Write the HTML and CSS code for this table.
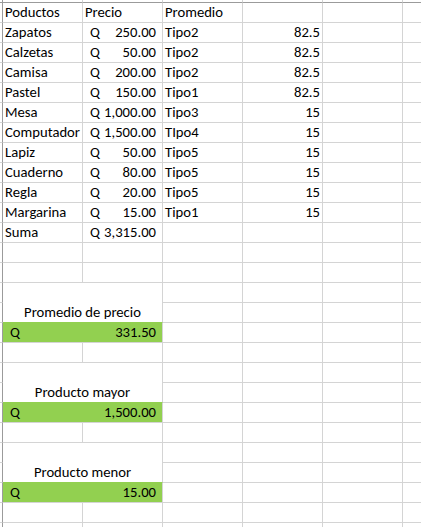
FILE: index.html
```html
<!DOCTYPE html>
<html>
<head>
<meta charset="utf-8"/>
<title>Productos</title>
<link rel="stylesheet" href="styles.css">
</head>
<body>

<table class="sheet">
<colgroup>
<col class="c-rh"><col class="c-cell"><col class="c-cell"><col class="c-cell"><col class="c-cell"><col class="c-cell"><col class="c-last">
</colgroup>
<tr class="colhead"><td class="corner"></td><td></td><td></td><td></td><td></td><td></td><td></td></tr>

<tr><td class="rh"></td><td>Poductos</td><td>Precio</td><td>Promedio</td><td></td><td></td><td></td></tr>
<tr><td class="rh"></td><td>Zapatos</td><td class="money"><div class="acct"><span>Q</span><span>250.00</span></div></td><td>Tipo2</td><td class="num">82.5</td><td></td><td></td></tr>
<tr><td class="rh"></td><td>Calzetas</td><td class="money"><div class="acct"><span>Q</span><span>50.00</span></div></td><td>Tipo2</td><td class="num">82.5</td><td></td><td></td></tr>
<tr><td class="rh"></td><td>Camisa</td><td class="money"><div class="acct"><span>Q</span><span>200.00</span></div></td><td>Tipo2</td><td class="num">82.5</td><td></td><td></td></tr>
<tr><td class="rh"></td><td>Pastel</td><td class="money"><div class="acct"><span>Q</span><span>150.00</span></div></td><td>Tipo1</td><td class="num">82.5</td><td></td><td></td></tr>
<tr><td class="rh"></td><td>Mesa</td><td class="money"><div class="acct"><span>Q</span><span>1,000.00</span></div></td><td>Tipo3</td><td class="num">15</td><td></td><td></td></tr>
<tr><td class="rh"></td><td>Computador</td><td class="money"><div class="acct"><span>Q</span><span>1,500.00</span></div></td><td>TIpo4</td><td class="num">15</td><td></td><td></td></tr>
<tr><td class="rh"></td><td>Lapiz</td><td class="money"><div class="acct"><span>Q</span><span>50.00</span></div></td><td>Tipo5</td><td class="num">15</td><td></td><td></td></tr>
<tr><td class="rh"></td><td>Cuaderno</td><td class="money"><div class="acct"><span>Q</span><span>80.00</span></div></td><td>Tipo5</td><td class="num">15</td><td></td><td></td></tr>
<tr><td class="rh"></td><td>Regla</td><td class="money"><div class="acct"><span>Q</span><span>20.00</span></div></td><td>Tipo5</td><td class="num">15</td><td></td><td></td></tr>
<tr><td class="rh"></td><td>Margarina</td><td class="money"><div class="acct"><span>Q</span><span>15.00</span></div></td><td>Tipo1</td><td class="num">15</td><td></td><td></td></tr>
<tr><td class="rh"></td><td>Suma</td><td class="money"><div class="acct"><span>Q</span><span>3,315.00</span></div></td><td></td><td></td><td></td><td></td></tr>
<tr><td class="rh"></td><td></td><td></td><td></td><td></td><td></td><td></td></tr>
<tr><td class="rh"></td><td></td><td></td><td></td><td></td><td></td><td></td></tr>

<!-- promedio de precio -->
<tr><td class="rh"></td><td class="label" colspan="2" rowspan="2">Promedio de precio</td><td></td><td></td><td></td><td></td></tr>
<tr><td class="rh"></td><td></td><td></td><td></td><td></td></tr>
<tr><td class="rh"></td><td class="green" colspan="2"><div class="acct"><span>Q</span><span>331.50</span></div></td><td></td><td></td><td></td><td></td></tr>
<tr><td class="rh"></td><td></td><td></td><td></td><td></td><td></td><td></td></tr>

<!-- producto mayor -->
<tr><td class="rh"></td><td class="label" colspan="2" rowspan="2">Producto mayor</td><td></td><td></td><td></td><td></td></tr>
<tr><td class="rh"></td><td></td><td></td><td></td><td></td></tr>
<tr><td class="rh"></td><td class="green" colspan="2"><div class="acct"><span>Q</span><span>1,500.00</span></div></td><td></td><td></td><td></td><td></td></tr>
<tr><td class="rh"></td><td></td><td></td><td></td><td></td><td></td><td></td></tr>

<!-- producto menor -->
<tr><td class="rh"></td><td class="label" colspan="2" rowspan="2">Producto menor</td><td></td><td></td><td></td><td></td></tr>
<tr><td class="rh"></td><td></td><td></td><td></td><td></td></tr>
<tr><td class="rh"></td><td class="green" colspan="2"><div class="acct"><span>Q</span><span>15.00</span></div></td><td></td><td></td><td></td><td></td></tr>
<tr><td class="rh"></td><td></td><td></td><td></td><td></td><td></td><td></td></tr>
<tr class="cut"><td class="rh"></td><td></td><td></td><td></td><td></td><td></td><td></td></tr>
</table>

</body>
</html>
```

FILE: styles.css
```css
html, body {
   margin: 0;
   padding: 0;
   background-color: white;
   overflow: hidden;
}

body {
   font-family: Carlito, "Liberation Sans", sans-serif;
   font-size: 14.67px;
   color: #000;
}

.sheet {
   border-collapse: separate;
   border-spacing: 0;
   table-layout: fixed;
   width: 421px;
}

.c-rh {
   width: 3px;
}

.c-cell {
   width: 80px;
}

.c-last {
   width: 18px;
}

.sheet td {
   box-sizing: border-box;
   height: 20px;
   padding: 0 2px 1px 2px;
   border-right: 1px solid #d4d4d4;
   border-bottom: 1px solid #d4d4d4;
   white-space: nowrap;
   vertical-align: bottom;
   line-height: 17px;
   overflow: visible;
}

.sheet td:last-child {
   border-right: none;
}

/* header strips */
.colhead td {
   height: 3px;
   padding: 0;
   line-height: 0;
   border-bottom: 1px solid #9b9b9b;
}

.sheet td.rh,
.sheet td.corner {
   padding: 0;
   border-right: 1px solid #9b9b9b;
}

.cut td {
   height: 4px;
   border-bottom: none;
}

.num {
   text-align: right;
}

.sheet td.money {
   padding-left: 7px;
   padding-right: 6px;
}

.acct {
   display: flex;
   justify-content: space-between;
}

.sheet td.label {
   text-align: center;
   background-color: white;
   border-bottom-color: #92d050;
}

.sheet td.green {
   background-color: #92d050;
   padding-left: 7px;
   padding-right: 6px;
}
```
